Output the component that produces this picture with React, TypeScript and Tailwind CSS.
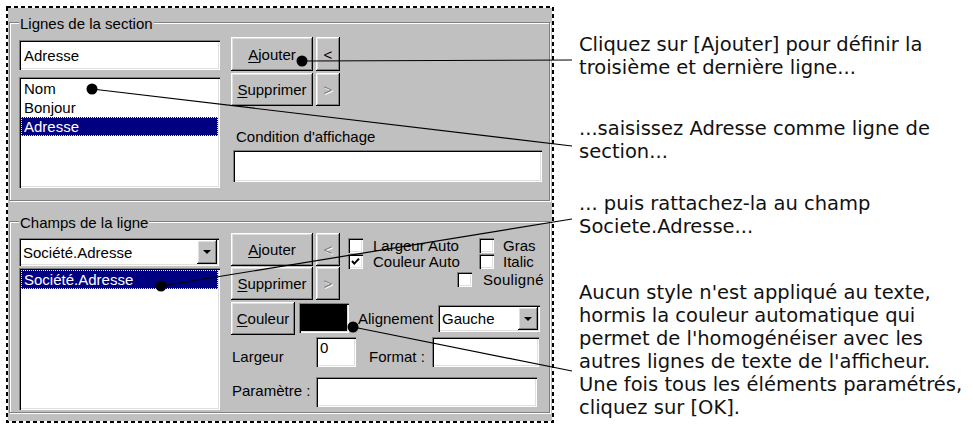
import React from "react";

const RAISED =
  "bg-[#c0c0c0] shadow-[inset_-1px_-1px_0_#000,inset_1px_1px_0_#fff,inset_-2px_-2px_0_#808080,inset_2px_2px_0_#dfdfdf]";
const SUNKEN =
  "shadow-[inset_1px_1px_0_#808080,inset_2px_2px_0_#000,inset_-1px_-1px_0_#fff,inset_-2px_-2px_0_#dfdfdf]";
const ETCHED = "border border-[#808080] shadow-[inset_1px_1px_0_#fff,1px_1px_0_#fff]";

function Btn({
  className,
  children,
  disabled,
}: {
  className: string;
  children: React.ReactNode;
  disabled?: boolean;
}) {
  return (
    <div
      className={`${RAISED} flex items-center justify-center leading-[17px] ${
        disabled ? "text-[#808080] [text-shadow:1px_1px_0_#fff]" : "text-black"
      } ${className}`}
    >
      {children}
    </div>
  );
}

function U({ children }: { children: React.ReactNode }) {
  return <span className="underline decoration-1 underline-offset-2">{children}</span>;
}

function Check({ checked }: { checked?: boolean }) {
  return (
    <div className={`w-[15px] h-[15px] bg-white ${SUNKEN} shrink-0 flex items-center justify-center`}>
      {checked && (
        <svg width="15" height="15" viewBox="0 0 15 15">
          <path d="M4 7 L6.3 9.6 L11 4.6" stroke="#000" strokeWidth="2" fill="none" />
        </svg>
      )}
    </div>
  );
}

function Combo({ className, text }: { className: string; text: string }) {
  return (
    <div className={`bg-white ${SUNKEN} flex items-stretch p-[2px] ${className}`}>
      <div className="flex-1 flex items-center pl-[2px] leading-[17px] whitespace-nowrap overflow-hidden">
        {text}
      </div>
      <div className={`${RAISED} w-[20px] flex items-center justify-center`}>
        <svg width="8" height="4" viewBox="0 0 8 4">
          <path d="M0 0H8L4 4Z" fill="#000" />
        </svg>
      </div>
    </div>
  );
}

export default function App() {
  return (
    <div className="relative w-[973px] h-[424px] bg-white overflow-hidden flex font-['Liberation_Sans',Arial,sans-serif] text-[15px] text-black">
      {/* Screenshot panel */}
      <div className="relative ml-[6px] mt-[6px] w-[548px] h-[417px] p-[2px] shrink-0">
        <div className="w-full h-full bg-[#c0c0c0] pt-[14px] pl-[1px]">
          {/* Group 1 */}
          <div className={`relative w-[541px] h-[179px] ${ETCHED} flex pl-[9px]`}>
            <span className="absolute left-[9px] top-[-8px] px-[1px] bg-[#c0c0c0] leading-[17px]">
              Lignes de la section
            </span>
            <div className="w-[201px] pt-[17px] flex flex-col">
              <div className={`h-[30px] bg-white ${SUNKEN} flex items-center pl-[5px] leading-[17px]`}>
                Adresse
              </div>
              <div className={`mt-[7px] h-[111px] bg-white ${SUNKEN} p-[2px] flex flex-col`}>
                <div className="h-[19px] pl-[3px] leading-[19px]">Nom</div>
                <div className="h-[19px] pl-[3px] leading-[19px]">Bonjour</div>
                <div className="h-[19px] pl-[2px] leading-[17px] bg-[#000080] text-white border border-dotted border-[#ffff80]">
                  Adresse
                </div>
              </div>
            </div>
            <div className="ml-[11px] pt-[14px] flex flex-col">
              <div className="flex gap-[3px]">
                <Btn className="w-[82px] h-[34px]">
                  <U>A</U>jouter
                </Btn>
                <Btn className="w-[24px] h-[34px]">&lt;</Btn>
              </div>
              <div className="flex gap-[3px] mt-[2px]">
                <Btn className="w-[82px] h-[33px]">
                  <U>S</U>upprimer
                </Btn>
                <Btn className="w-[24px] h-[33px]" disabled>
                  &gt;
                </Btn>
              </div>
              <div className="mt-[22px] pl-[5px] leading-[17px]">Condition d'affichage</div>
              <div className={`mt-[5px] ml-[2px] w-[309px] h-[32px] bg-white ${SUNKEN}`} />
            </div>
          </div>

          {/* Group 2 */}
          <div className={`relative mt-[20px] w-[541px] h-[192px] ${ETCHED} flex pl-[9px]`}>
            <span className="absolute left-[9px] top-[-8px] px-[1px] bg-[#c0c0c0] leading-[17px]">
              Champs de la ligne
            </span>
            <div className="w-[201px] pt-[16px] flex flex-col">
              <Combo className="w-[200px] h-[28px]" text="Société.Adresse" />
              <div className={`mt-[2px] h-[142px] bg-white ${SUNKEN} p-[2px] flex flex-col`}>
                <div className="h-[19px] pl-[2px] leading-[17px] bg-[#000080] text-white border border-dotted border-[#ffff80]">
                  Société.Adresse
                </div>
              </div>
            </div>
            <div className="ml-[11px] pt-[11px] flex flex-col">
              <div className="flex">
                <div className="grid grid-cols-[82px_24px] gap-x-[3px] gap-y-[1px]">
                  <Btn className="h-[33px]">
                    <U>A</U>jouter
                  </Btn>
                  <Btn className="h-[33px]" disabled>
                    &lt;
                  </Btn>
                  <Btn className="h-[33px]">
                    <U>S</U>upprimer
                  </Btn>
                  <Btn className="h-[33px]" disabled>
                    &gt;
                  </Btn>
                </div>
                <div className="ml-[8px] pt-[4px] flex flex-col leading-[17px] whitespace-nowrap">
                  <div className="h-[16px] flex items-center">
                    <div className="w-[131px] flex items-center">
                      <Check />
                      <span className="ml-[10px]">Largeur Auto</span>
                    </div>
                    <div className="flex items-center">
                      <Check />
                      <span className="ml-[9px]">Gras</span>
                    </div>
                  </div>
                  <div className="h-[16px] flex items-center">
                    <div className="w-[131px] flex items-center">
                      <Check checked />
                      <span className="ml-[10px]">Couleur Auto</span>
                    </div>
                    <div className="flex items-center">
                      <Check />
                      <span className="ml-[9px]">Italic</span>
                    </div>
                  </div>
                  <div className="mt-[3px] h-[15px] pl-[109px] flex items-center">
                    <Check />
                    <span className="ml-[11px] tracking-[0.3px]">Souligné</span>
                  </div>
                </div>
              </div>
              <div className="mt-[2px] flex items-start">
                <Btn className="w-[64px] h-[33px]">
                  <U>C</U>ouleur
                </Btn>
                <div className={`ml-[4px] mt-[1px] w-[50px] h-[30px] bg-black ${SUNKEN}`} />
                <div className="ml-[9px] w-[80px] self-center leading-[17px]">Alignement</div>
                <Combo className="mt-[3px] w-[102px] h-[27px]" text="Gauche" />
              </div>
              <div className="mt-[2px] h-[30px] flex items-start leading-[17px]">
                <div className="w-[85px] pl-[1px] pt-[11px]">Largeur</div>
                <div className={`w-[40px] h-[30px] bg-white ${SUNKEN} pl-[4px] pt-[2px]`}>0</div>
                <div className="ml-[13px] w-[63px] pt-[11px]">Format :</div>
                <div className={`w-[107px] h-[30px] bg-white ${SUNKEN}`} />
              </div>
              <div className="mt-[10px] h-[30px] flex items-start leading-[17px]">
                <div className="w-[85px] pl-[1px] pt-[5px]">Paramètre :</div>
                <div className={`w-[221px] h-[30px] bg-white ${SUNKEN}`} />
              </div>
            </div>
          </div>
        </div>
        <svg className="absolute inset-0 pointer-events-none" width="548" height="417">
          <rect x="1" y="1" width="546" height="415" fill="none" stroke="#000" strokeWidth="2" strokeDasharray="4 3" />
        </svg>
      </div>

      {/* Callout texts */}
      <div className="ml-[25px] flex flex-col font-['DejaVu_Sans',Verdana,sans-serif] text-[19.5px] leading-[23px] whitespace-nowrap text-[#111]">
        <div className="mt-[33px]">
          <div>Cliquez sur [Ajouter] pour définir la</div>
          <div>troisième et dernière ligne...</div>
        </div>
        <div className="mt-[38px]">
          <div>...saisissez Adresse comme ligne de</div>
          <div>section...</div>
        </div>
        <div className="mt-[29px]">
          <div>... puis rattachez-la au champ</div>
          <div>Societe.Adresse...</div>
        </div>
        <div className="mt-[43px]">
          <div>Aucun style n'est appliqué au texte,</div>
          <div>hormis la couleur automatique qui</div>
          <div>permet de l'homogénéiser avec les</div>
          <div>autres lignes de texte de l'afficheur.</div>
          <div>Une fois tous les éléments paramétrés,</div>
          <div>cliquez sur [OK].</div>
        </div>
      </div>

      {/* Leader lines */}
      <svg className="absolute inset-0 pointer-events-none" width="973" height="424">
        <g stroke="#000" strokeWidth="1.2">
          <line x1="302" y1="61" x2="572" y2="60" />
          <line x1="92" y1="89" x2="572" y2="146" />
          <line x1="161" y1="286" x2="572" y2="219" />
          <line x1="353" y1="327" x2="572" y2="371" />
        </g>
        <g fill="#000">
          <circle cx="302" cy="61" r="5.5" />
          <circle cx="92" cy="89" r="5.5" />
          <circle cx="161" cy="286" r="5.5" />
          <circle cx="353" cy="327" r="5.5" />
        </g>
      </svg>
    </div>
  );
}
